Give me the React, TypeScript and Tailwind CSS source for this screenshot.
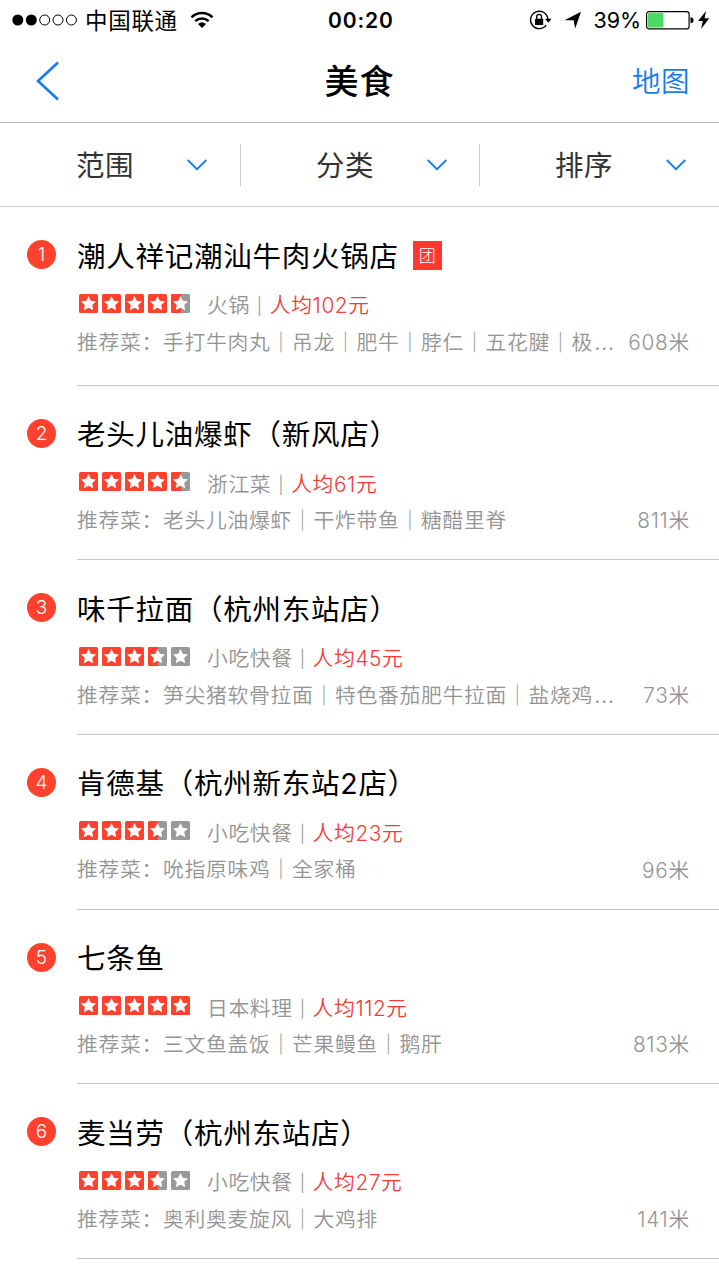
import React from "react";

type Shop = {
  name: string;
  group?: boolean;
  rating: number;
  kind: string;
  price: string;
  dishes: string;
  more?: boolean;
  distance: string;
};

const shops: Shop[] = [
  { name: "潮人祥记潮汕牛肉火锅店", group: true, rating: 4.5, kind: "火锅", price: "人均102元", dishes: "手打牛肉丸｜吊龙｜肥牛｜脖仁｜五花腱｜极", more: true, distance: "608米" },
  { name: "老头儿油爆虾（新风店）", rating: 4.5, kind: "浙江菜", price: "人均61元", dishes: "老头儿油爆虾｜干炸带鱼｜糖醋里脊", distance: "811米" },
  { name: "味千拉面（杭州东站店）", rating: 3.5, kind: "小吃快餐", price: "人均45元", dishes: "笋尖猪软骨拉面｜特色番茄肥牛拉面｜盐烧鸡", more: true, distance: "73米" },
  { name: "肯德基（杭州新东站2店）", rating: 3.5, kind: "小吃快餐", price: "人均23元", dishes: "吮指原味鸡｜全家桶", distance: "96米" },
  { name: "七条鱼", rating: 5, kind: "日本料理", price: "人均112元", dishes: "三文鱼盖饭｜芒果鳗鱼｜鹅肝", distance: "813米" },
  { name: "麦当劳（杭州东站店）", rating: 3.5, kind: "小吃快餐", price: "人均27元", dishes: "奥利奥麦旋风｜大鸡排", distance: "141米" },
];

function Star({ fill }: { fill: number }) {
  return (
    <svg viewBox="0 0 19 19" className="h-[19px] w-[19px] shrink-0">
      <rect width="19" height="19" rx="1.5" fill={fill === 1 ? "#ff412e" : "#999999"} />
      {fill === 0.5 && <path d="M1.5 0H10V19H1.5A1.5 1.5 0 0 1 0 17.5V1.5A1.5 1.5 0 0 1 1.5 0Z" fill="#ff412e" />}
      <path d="M9.5 2l2.300 4.700 5.200.7-3.800 3.600 1 5.200-4.700-2.500-4.700 2.500 1-5.200L2 7.400l5.200-.7z" fill="#fff" />
    </svg>
  );
}

function StatusBar() {
  return (
    <div className="flex h-10 items-center pl-[12px] text-black">
      <svg viewBox="0 0 66 12" className="h-[12px] w-[66px] shrink-0">
        <circle cx="5.8" cy="6" r="5.5" />
        <circle cx="19.3" cy="6" r="5.5" />
        <circle cx="32.7" cy="6" r="5" fill="none" stroke="#000" strokeWidth="1" />
        <circle cx="46" cy="6" r="5" fill="none" stroke="#000" strokeWidth="1" />
        <circle cx="59.4" cy="6" r="5" fill="none" stroke="#000" strokeWidth="1" />
      </svg>
      <span className="ml-[7px] w-[106px] shrink-0 pt-px text-[22.5px] leading-10 tracking-[0.7px] whitespace-nowrap">中国联通</span>
      <svg viewBox="0 0 24 18" className="-ml-px h-[18px] w-[24px] shrink-0">
        <path d="M1.5 6.3C7.3.7 16.7.7 22.5 6.3" fill="none" stroke="#000" strokeWidth="2.500" />
        <path d="M5.3 10.1C9.2 6.5 14.8 6.5 18.7 10.1" fill="none" stroke="#000" strokeWidth="2.500" />
        <path d="M8 12.9Q12 9.8 16 12.9L12 17z" />
      </svg>
      <span className="ml-[114px] w-[68px] shrink-0 pt-px text-[21px] font-semibold tracking-[0.85px] whitespace-nowrap">00:20</span>
      <svg viewBox="0 0 23 20" className="ml-[133px] h-[20px] w-[23px] shrink-0">
        <path d="M17.2 15.2A8.700 8.700 0 1 1 18.900 9" fill="none" stroke="#000" strokeWidth="1.400" />
        <path d="M16 8.800h6.500l-3.200 4z" />
        <rect x="6" y="8.800" width="8.200" height="6.200" rx=".6" />
        <path d="M7.700 9V6.800a2.400 2.400 0 0 1 4.800 0V9" fill="none" stroke="#000" strokeWidth="1.400" />
      </svg>
      <svg viewBox="0 0 18 18" className="ml-[12px] h-[18px] w-[18px] shrink-0">
        <path d="M17 .8L11.200 17.400 9.600 9.300 .5 9.300z" />
      </svg>
      <span className="ml-[11.500px] w-[49px] shrink-0 text-[21.500px] whitespace-nowrap">39%</span>
      <svg viewBox="0 0 48 20" className="ml-[3px] h-[20px] w-[48px] shrink-0">
        <rect x=".6" y="1.600" width="42.500" height="17.300" rx="2.500" fill="#fff" stroke="#000" strokeWidth="1.200" />
        <rect x="2" y="3" width="15.500" height="14.500" rx="1" fill="#4cd964" />
        <path d="M44.500 7.200a3 3 0 0 1 0 6z" />
      </svg>
      <svg viewBox="0 0 12 18" className="ml-[4px] h-[18px] w-[12px] shrink-0">
        <path d="M8 0L0 10h4.800L3 18l8.300-10.700H6.600z" />
      </svg>
    </div>
  );
}

export default function App() {
  return (
    <div className="h-[1280px] w-[719px] overflow-hidden bg-white font-[Inter,'Noto_Sans_CJK_SC',sans-serif] text-black">
      <header className="h-[123px] border-b border-[#b8b8b8]">
        <StatusBar />
        <div className="grid h-[82px] grid-cols-[200px_1fr_200px] items-center">
          <svg viewBox="0 0 24 40" className="ml-[36px] h-[40px] w-[24px]">
            <path d="M22 1.500L2 20l20 18.500" fill="none" stroke="#147cf0" strokeWidth="2.600" />
          </svg>
          <h1 className="pt-[2px] text-center text-[34px] leading-none font-medium tracking-[1px]">美食</h1>
          <button className="mr-[29px] pt-[3px] text-right text-[28.500px] leading-none font-[350] tracking-[0.5px] text-[#147cf0]">地图</button>
        </div>
      </header>
      <nav className="flex h-[84px] items-center border-b border-[#cccccc]">
        {["范围", "分类", "排序"].map((label, i) => (
          <div
            key={label}
            className={`flex h-[42px] items-center text-[28.5px] tracking-[0.5px] text-[#333] ${i < 2 ? "border-r border-[#cccccc]" : ""} ${i === 0 ? "w-[241px] pl-[76px]" : "w-[239px] pl-[75px]"}`}
          >
            <span className="w-[111px] pt-[4px] leading-none">{label}</span>
            <svg viewBox="0 0 20 12" className="h-[12px] w-[20px]">
              <path d="M.7 1L10 10.200 19.300 1" fill="none" stroke="#147cf0" strokeWidth="1.800" />
            </svg>
          </div>
        ))}
      </nav>
      <ol>
        {shops.map((shop, i) => (
          <li key={shop.name} className="flex">
            <div className="w-[77px] shrink-0 pt-[33px] pl-[27px]">
              <span className="flex h-[29px] w-[29px] items-center justify-center rounded-full bg-[#ff412e] text-[19px] leading-none font-light text-white">
                {i + 1}
              </span>
            </div>
            <div className={`flex-1 border-b border-[#c8c8c8] pr-[29px] ${i === 0 ? "h-[178.8px]" : "h-[174.6px]"} pt-[29px]`}>
              <h2 className="flex h-10 items-center text-[28.500px] leading-10 tracking-[0.75px] whitespace-nowrap">
                <span className="pt-[1px]">{shop.name}</span>
                {shop.group && (
                  <span className="mb-px ml-[14px] flex h-[29px] w-[29px] items-center justify-center bg-[#ff372e] pt-[2px] text-[17px] leading-none font-light tracking-normal text-white">团</span>
                )}
              </h2>
              <div className="mt-[10px] flex h-[38px] items-center text-[20.800px] leading-none font-[350] tracking-[0.6px] whitespace-nowrap text-[#949494]">
                <span className="mr-[17.500px] ml-[1.500px] flex gap-[4px] pb-[4px]">
                  {[0, 1, 2, 3, 4].map((n) => (
                    <Star key={n} fill={shop.rating >= n + 1 ? 1 : shop.rating > n ? 0.5 : 0} />
                  ))}
                </span>
                <span className="pt-[3px]">{shop.kind}</span>
                <span className="w-[20px] pt-[3px] text-center text-[17px]">|</span>
                <span className="pt-[3px] text-[#f23c35]">{shop.price}</span>
              </div>
              <div className="flex h-[36px] items-center justify-between pt-[2px] text-[20.800px] leading-none font-[350] tracking-[0.7px] whitespace-nowrap text-[#949494]">
                <span className="flex h-[21px] items-baseline">
                  <span>推荐菜：{shop.dishes}</span>
                  {shop.more && <span className="ml-px text-[24px] leading-[0]">…</span>}
                </span>
                <span>{shop.distance}</span>
              </div>
            </div>
          </li>
        ))}
      </ol>
    </div>
  );
}
